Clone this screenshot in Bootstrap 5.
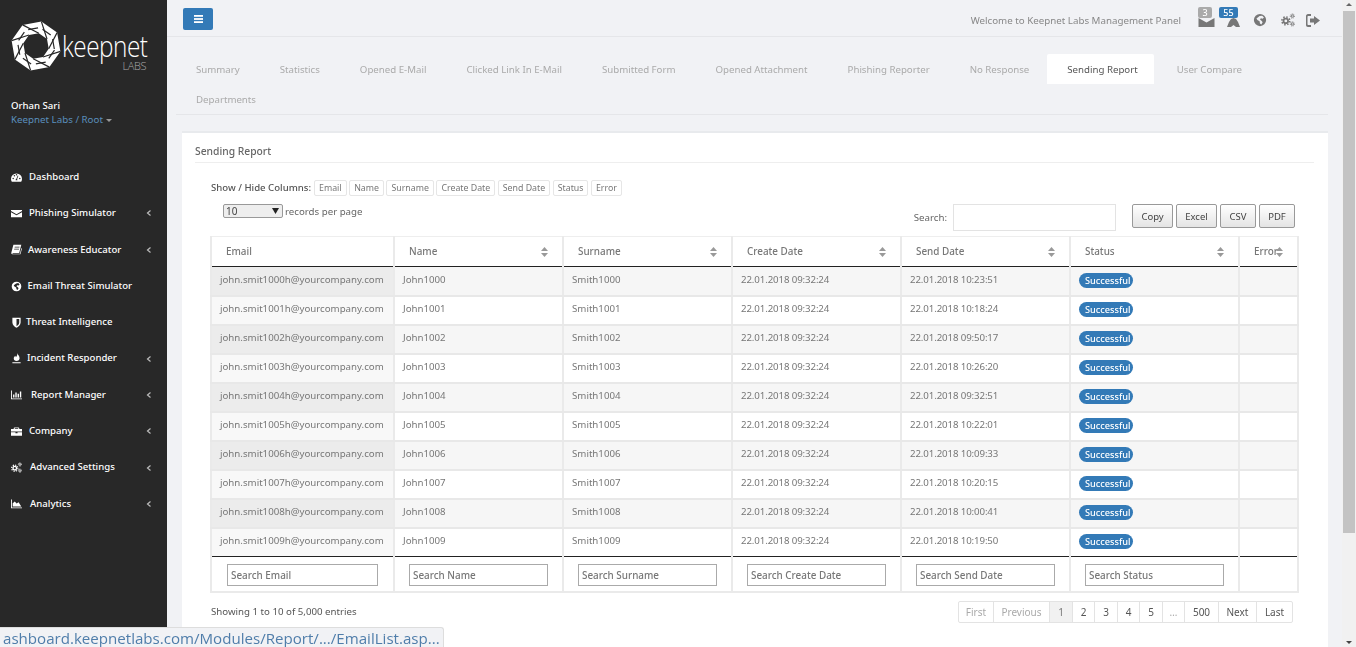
<!DOCTYPE html>
<html lang="en"><head><meta charset="utf-8"><title>Sending Report</title>
<link rel="stylesheet" href="https://cdn.jsdelivr.net/npm/bootstrap@5.3.0/dist/css/bootstrap.min.css">
<style>
html,body{height:100%;overflow:hidden}
body{font-family:"Noto Sans","Open Sans",sans-serif;font-size:9.7px;color:#777;background:#f1f2f5}
.shell{height:647px}
.side{width:167px;background:#282828;color:#fff;flex:none}
.brand{padding:21px 0 0 11px;height:99px}
.brand-txt{width:85px;margin-left:1px}
.brand-word{font-family:"Open Sans",sans-serif;font-weight:300;font-size:29px;line-height:24px;letter-spacing:-.6px;color:#fff;margin-top:13px;white-space:nowrap;transform:scaleX(.84);transform-origin:left center;height:24px}
.brand-labs{font-family:"Open Sans",sans-serif;font-weight:300;font-size:11px;line-height:10px;color:#aaa;text-align:right;letter-spacing:-.4px;margin-top:3px;padding-right:1px}
.who{padding:0 11px;height:29px;line-height:14px;margin-bottom:31px}
.who b{font-weight:500;display:block;color:#fff;font-size:9.6px}
.who span{color:#5a8fbd;font-size:9.75px}
.who i{display:inline-block;border:3px solid transparent;border-top-color:#999;border-bottom:0;margin:0 0 1px 3px}
.menu a{display:flex;align-items:center;height:36.3px;color:#fff;text-decoration:none;padding-left:11px;font-weight:500;white-space:nowrap;font-size:9.6px}
.menu svg{width:11px;height:11px;fill:#fff;flex:none}
.menu .lbl{margin-left:var(--g,7px)}
.menu .chev{margin-left:auto;margin-right:15px;width:6px;height:6px;fill:none;stroke:#bbb;stroke-width:1.2}
.mainc{flex:1 1 0;min-width:0;overflow:hidden;will-change:transform}
.topb{height:37px;border-bottom:1px solid #e5e6e9;padding:8px 22px 0 16px}
.menubtn{width:30px;height:22px;background:#337ab7;border:0;border-radius:2px;padding:0;display:flex;align-items:center;justify-content:center}
.welcome{color:#888;margin-right:17px;font-size:9.75px;margin-top:6px}
.tic{position:relative;display:block;fill:#777;color:#777}
.tbadge{position:absolute;top:-1px;font-size:9px;line-height:11px;height:11px;padding:0 3px;border-radius:2px;color:#fff;text-align:center;font-weight:500}
.tabs-k{margin:17px 0 0 9px;padding-right:60px;border:0;--bs-nav-tabs-border-width:0;row-gap:0}
.tabs-k .nav-link{font-size:9.68px;color:#aaa;padding:0 20px;height:30px;line-height:31px;border-radius:2px 2px 0 0;border:0;margin:0;white-space:nowrap}
.tabs-k .nav-link.active{background:#fff;color:#555;padding-right:16px;margin-left:-2px}
.tabs-k .active-next .nav-link{padding-left:23px}
.tabrule{border-top:1px solid #e5e6e9;margin:0 14px 0 9px;height:0}
.repcard{margin:16px 14px 0 15px;border:0;border-top:2px solid #e8eaed;border-radius:0;background:#fff;padding:0 14px 0 13px;height:520px}
.rep-title{height:30px;line-height:37px;border-bottom:1px solid #eee;font-weight:500;color:#666;font-size:10.3px}
.colsrow{padding-left:16px;margin-top:17px;height:16px;line-height:16px;color:#555;font-weight:500;font-size:9.6px}
.colsrow .lead-in{margin-right:3px}
.chip{border:1px solid #e6e6e6;border-radius:2px;height:16px;line-height:14px;padding:0 4px;margin-right:2.500px;color:#777;font-size:8.8px;font-weight:400;background:#fff}
.toolrow{padding-left:16px;margin-top:8px;height:32px;padding-right:19px}
.rppsel{width:60px;height:14px;font-size:10px;line-height:12px;border:1px solid #999;border-radius:2px;background:#eee url("data:image/svg+xml,%3Csvg xmlns='http://www.w3.org/2000/svg' width='7' height='6'%3E%3Cpath d='M0 0h7L3.500 6z' fill='%23222'/%3E%3C/svg%3E") no-repeat right 3px center;color:#444;padding:0 2px;margin-left:12px;appearance:none}
.lenlab{color:#666;height:13px;line-height:13px;margin-top:1px;margin-left:2px}
.srch{width:163px;height:27px;border:1px solid #e3e3e3;border-radius:0;margin:0 16px 0 6px;padding:0}
.xbtn{height:24px;padding:0;line-height:24px;font-size:9.5px;color:#444;border:1px solid #999;border-radius:2px;background:linear-gradient(#fff,#e4e4e4);margin-right:3px;text-align:center}
.tblk{width:1089px;margin:0 0 0 15px;table-layout:fixed;border-collapse:collapse;--bs-table-bg:transparent;color:#777}
.tblk>*>tr>*{border:0;border-left:2px solid #eaeaea;border-right:2px solid #eaeaea;padding:0 8px;vertical-align:middle;font-size:9.7px;color:#777;white-space:nowrap;overflow:hidden}
.tblk thead th{height:30px;border-top:1px solid #eee;border-bottom:1px solid #222;font-weight:500;padding:0 14px;position:relative;color:#777;font-size:9.9px}
.tblk tbody td{height:29px;border-bottom:2px solid #e8e8e8;padding-bottom:1px}
.tblk tbody td:nth-child(4),.tblk tbody td:nth-child(5){letter-spacing:-.12px}
.tblk tbody tr:last-child td{border-bottom:1px solid #222}
.tblk tbody tr:nth-child(odd) td{background:#f6f6f6}
.tblk tbody tr:nth-child(odd) td:first-child{background:#ececec}
.tblk tbody tr:nth-child(even) td:first-child{background:#f8f8f8}
.tblk>tfoot>tr>td{height:35px;border-bottom:2px solid #eaeaea;padding:2px 14px 0}
.tblk>tfoot>tr>td:first-child{padding-left:15px}
.tblk tfoot td:first-child .colin{width:151px}
.sorti{position:absolute;right:14px;top:10px;width:7px;height:10px;fill:#999}
.stat{--bs-badge-font-size:9.2px;--bs-badge-font-weight:500;--bs-badge-padding-x:6px;--bs-badge-padding-y:0;line-height:15px;height:15px;width:54px;background:#337ab7;display:block}
.colin{width:139px;height:22px;border:1px solid #aaa;font-size:9.9px;padding:0 3px;color:#777;display:block;background:#fff;border-radius:0}
.colin::placeholder{color:#777;font-weight:500}
.foot{padding-left:16px;margin-top:8px;padding-right:21px}
.pagek{--bs-pagination-padding-x:0;--bs-pagination-padding-y:0;--bs-pagination-font-size:10px;--bs-pagination-color:#555;--bs-pagination-border-color:#e3e3e3;--bs-pagination-border-radius:2px;margin:0}
.pagek .page-link{height:22px;line-height:20px;text-align:center;display:block}
.pagek .off{color:#aaa}
.pagek .active .page-link{background:#f1f1f1;color:#777;border-color:#e3e3e3}
.showing{color:#555;margin-top:4px}
.vbar{width:14px;flex:none;background:#f1f1f1;display:flex;flex-direction:column;justify-content:space-between;align-items:center}
.vbar i{display:block;border:3.500px solid transparent}
.vthumb{position:absolute;top:11px;right:1px;width:12px;height:522px;background:#c3c3c3}
.statusb{position:absolute;left:0;bottom:0;height:20px;width:444px;background:#f1f2f5;border:1px solid #ddd;border-left:0;border-bottom:0;border-radius:0 3px 0 0;padding-left:3px;line-height:20px;font-family:"Open Sans","Noto Sans",sans-serif;font-size:15.1px;color:#4f7daa;white-space:nowrap;overflow:hidden}
</style></head><body>
<svg width="0" height="0" class="d-block" style="position:absolute">
<symbol id="i-gauge" viewBox="0 0 16 16"><path d="M8 2a8 8 0 0 0-8 8c0 1.600.5 3 1.200 4h13.600c.7-1 1.200-2.400 1.200-4a8 8 0 0 0-8-8zM3.200 10.500a1.100 1.100 0 1 1 0-2.200 1.100 1.100 0 0 1 0 2.200zM5 6.500a1.100 1.100 0 1 1 0-2.200 1.100 1.100 0 0 1 0 2.200zM8 5.200A1.100 1.100 0 1 1 8 3a1.100 1.100 0 0 1 0 2.200zM9.300 12H6.700a1.600 1.600 0 0 1 1-1.900L9.800 5l1 .4-2 5c.5.300.7 1 .5 1.600zM12.800 10.500a1.100 1.100 0 1 1 0-2.200 1.100 1.100 0 0 1 0 2.200z" fill-rule="evenodd"/></symbol>
<symbol id="i-mail" viewBox="0 0 16 16"><path d="M0 3h16v1.500L8 9 0 4.500zM0 6l8 4.500L16 6v7.500H0z"/></symbol>
<symbol id="i-book" viewBox="0 0 16 16"><path d="M3.500 1H15l-.4 1.500-2.700 10.500H2.600c-.6 0-.6 1 0 1H13l2-8 1 .6L13.700 15H2C.6 15 .2 13.600.5 12.500zM5.500 4l-.3 1h7l.3-1zM4.800 7l-.3 1h7l.3-1z" fill-rule="evenodd"/></symbol>
<symbol id="i-globe" viewBox="0 0 16 16"><path d="M8 1a7 7 0 1 0 0 14A7 7 0 0 0 8 1zm-.5 2.500L10.500 3l2 2-1.500 1.500-2-.5-1 1.500 2 1.500 1 1.500-1.500 2.500-1.500-1-.5-2.500-2.500-1.500L4 6l1.500-1z" fill-rule="evenodd"/></symbol>
<symbol id="i-shield" viewBox="0 0 16 16"><path d="M2 1h12v7c0 4-3.500 6.500-6 7.500C5.500 14.500 2 12 2 8zM8 3v10.300c2-1 4-2.800 4-5.300V3z" fill-rule="evenodd"/></symbol>
<symbol id="i-fire" viewBox="0 0 16 16"><path d="M9 0c.5 2.500 3.500 4 3.500 7.500 0 2.200-1.800 4-4.500 4-2.500 0-4-1.700-4-3.500 0-2 1.500-2.700 2-4 .8.500 1 1.300 1 2C8.500 5 9.500 3 9 0zM2 13.500h12V15H2z"/></symbol>
<symbol id="i-bars" viewBox="0 0 16 16"><path d="M0 2h1.300v11.700H16V15H0zM3 8h2v4.500H3zM6.300 5h2v7.500h-2zM9.600 7h2v5.500h-2zM12.900 3.500h2v9h-2z"/></symbol>
<symbol id="i-case" viewBox="0 0 16 16"><path d="M5 2h6l1 1v1.500h4V8H0V4.500h4V3zm.5 1.200v1.300h5V3.200zM0 9h6.500v1.500h3V9H16v5H0z" fill-rule="evenodd"/></symbol>
<symbol id="i-cogs" viewBox="0 0 16 16"><g fill="none" stroke="currentColor"><circle cx="5.500" cy="9" r="2.600" stroke-width="2"/><circle cx="5.500" cy="9" r="4.500" stroke-width="1.800" stroke-dasharray="1.770 1.760"/><circle cx="13" cy="3.500" r="1.300" stroke-width="1.100"/><circle cx="13" cy="3.500" r="2.400" stroke-width="1.100" stroke-dasharray="1 .9"/><circle cx="13" cy="12.500" r="1.300" stroke-width="1.100"/><circle cx="13" cy="12.500" r="2.400" stroke-width="1.100" stroke-dasharray="1 .9"/></g></symbol>
<symbol id="i-area" viewBox="0 0 16 16"><path d="M0 2h1.300v11.700H16V15H0zM2.500 12.500V7.500L5.500 5l2.700 3L11 6l4 6.500z"/></symbol>
<symbol id="i-sort" viewBox="0 0 7 10"><path d="M3.500 0 7 4H0zM0 6h7l-3.500 4z"/></symbol>
</svg>
<div class="shell d-flex position-relative">
<aside class="side">
<div class="brand d-flex">
<svg width="50" height="50" viewBox="0 0 50 50" class="flex-shrink-0"><path fill="#fff" fill-rule="evenodd" d="M49.400 30.400 38.400 46.100 19.600 49.400 3.900 38.400 .6 19.600 11.600 3.900 30.400 .6 46.100 11.600ZM37.700 27.800 36 18 27.800 12.300 18 14 12.300 22.200 14 32 22.200 37.700 32 36Z"/><path fill="none" stroke="#282828" stroke-width="1.200" d="M49.400 30.400 32 36M38.400 46.100 22.200 37.700M19.600 49.400 14 32M3.900 38.400 12.300 22.200M.6 19.600 18 14M11.600 3.900 27.800 12.300M30.400 .6 36 18M46.100 11.600 37.700 27.800"/><path fill="none" stroke="#282828" stroke-width="1.200" stroke-dasharray="10 5" d="M43.500 29.100 35.200 41 20.900 43.500 9 35.200 6.500 20.900 14.800 9 29.100 6.500 41 14.800Z"/></svg>
<div class="brand-txt"><div class="brand-word">keepnet</div><div class="brand-labs">LABS</div></div>
</div>
<div class="who"><b>Orhan Sari</b><span>Keepnet Labs / Root</span><i></i></div>
<nav class="menu">
<a href="#"><svg><use href="#i-gauge"/></svg><span class="lbl">Dashboard</span></a>
<a href="#"><svg><use href="#i-mail"/></svg><span class="lbl">Phishing Simulator</span><svg class="chev" viewBox="0 0 6 6"><path d="M4.500.5 1.500 3l3 2.500"/></svg></a>
<a href="#"><svg><use href="#i-book"/></svg><span class="lbl" style="--g:6px">Awareness Educator</span><svg class="chev" viewBox="0 0 6 6"><path d="M4.500.5 1.500 3l3 2.500"/></svg></a>
<a href="#"><svg><use href="#i-globe"/></svg><span class="lbl" style="--g:5.500px">Email Threat Simulator</span></a>
<a href="#"><svg><use href="#i-shield"/></svg><span class="lbl" style="--g:4px">Threat Intelligence</span></a>
<a href="#"><svg><use href="#i-fire"/></svg><span class="lbl" style="--g:5px">Incident Responder</span><svg class="chev" viewBox="0 0 6 6"><path d="M4.500.5 1.500 3l3 2.500"/></svg></a>
<a href="#"><svg><use href="#i-bars"/></svg><span class="lbl" style="--g:9px">Report Manager</span><svg class="chev" viewBox="0 0 6 6"><path d="M4.500.5 1.500 3l3 2.500"/></svg></a>
<a href="#"><svg><use href="#i-case"/></svg><span class="lbl">Company</span><svg class="chev" viewBox="0 0 6 6"><path d="M4.500.5 1.500 3l3 2.500"/></svg></a>
<a href="#"><svg><use href="#i-cogs"/></svg><span class="lbl" style="--g:8px">Advanced Settings</span><svg class="chev" viewBox="0 0 6 6"><path d="M4.500.5 1.500 3l3 2.500"/></svg></a>
<a href="#"><svg><use href="#i-area"/></svg><span class="lbl" style="--g:8px">Analytics</span><svg class="chev" viewBox="0 0 6 6"><path d="M4.500.5 1.500 3l3 2.500"/></svg></a>
</nav>
</aside>
<main class="mainc">
<div class="topb d-flex">
<button class="menubtn" aria-label="Menu"><svg width="9" height="8" viewBox="0 0 9 8" fill="#fff"><rect width="9" height="1.800"/><rect y="3.100" width="9" height="1.800"/><rect y="6.200" width="9" height="1.800"/></svg></button>
<div class="ms-auto d-flex align-items-start">
<span class="welcome">Welcome to Keepnet Labs Management Panel</span>
<span class="tic" style="width:17px;height:22px;margin-right:4px"><svg width="17" height="9" viewBox="0 0 16 9" style="position:absolute;left:0;top:10px" fill="#777"><path d="M0 0l8 4.500L16 0v9H0z"/></svg><span class="tbadge" style="left:0;width:14px;background:#aaa">3</span></span>
<span class="tic" style="width:22px;height:22px;margin-right:12px"><svg width="13" height="9" viewBox="0 0 13 9" style="position:absolute;left:8px;top:10px" fill="#777"><path d="M6.500 0 9 1l2 3 2 5H9L6.500 7 4 9H0l2-5 2-3z"/></svg><span class="tbadge" style="left:0;width:19px;background:#337ab7">55</span></span>
<svg class="tic" width="14" height="14" style="margin:5px 13px 0 0"><use href="#i-globe"/></svg>
<svg class="tic" width="16" height="14" style="margin:5px 10px 0 0"><use href="#i-cogs"/></svg>
<svg class="tic" width="14" height="13" viewBox="0 0 14 13" style="margin-top:6px"><path d="M5 0v2H2L1.500 2.500v8l.5.500h3v2H2C.8 13 0 12 0 11V2C0 1 .8 0 2 0zM8 2l6 4.500L8 11V8.500H4v-4h4z"/></svg>
</div>
</div>
<ul class="nav nav-tabs tabs-k">
<li class="nav-item"><a class="nav-link" href="#">Summary</a></li>
<li class="nav-item"><a class="nav-link" href="#">Statistics</a></li>
<li class="nav-item"><a class="nav-link" href="#">Opened E-Mail</a></li>
<li class="nav-item"><a class="nav-link" href="#">Clicked Link In E-Mail</a></li>
<li class="nav-item"><a class="nav-link" href="#">Submitted Form</a></li>
<li class="nav-item"><a class="nav-link" href="#">Opened Attachment</a></li>
<li class="nav-item"><a class="nav-link" href="#">Phishing Reporter</a></li>
<li class="nav-item"><a class="nav-link" href="#">No Response</a></li>
<li class="nav-item"><a class="nav-link active" href="#">Sending Report</a></li>
<li class="nav-item active-next"><a class="nav-link" href="#">User Compare</a></li>
<li class="nav-item"><a class="nav-link" href="#">Departments</a></li>
</ul>
<div class="tabrule"></div>
<section class="card repcard">
<div class="rep-title">Sending Report</div>
<div class="colsrow d-flex"><span class="lead-in">Show / Hide Columns:</span><span class="chip">Email</span><span class="chip">Name</span><span class="chip">Surname</span><span class="chip">Create Date</span><span class="chip">Send Date</span><span class="chip">Status</span><span class="chip">Error</span></div>
<div class="toolrow d-flex align-items-start">
<select class="rppsel" aria-label="Records"><option>10</option></select><span class="lenlab">records per page</span>
<span class="ms-auto lenlab" style="margin-top:7px">Search:</span><input class="srch form-control" aria-label="Search">
<button class="btn xbtn" style="width:41px">Copy</button><button class="btn xbtn" style="width:41px">Excel</button><button class="btn xbtn" style="width:36px">CSV</button><button class="btn xbtn me-0" style="width:36px">PDF</button>
</div>
<table class="table tblk mb-0">
<colgroup><col style="width:183px"><col style="width:169px"><col style="width:169px"><col style="width:169px"><col style="width:169px"><col style="width:169px"><col></colgroup>
<thead><tr><th>Email</th><th>Name<svg class="sorti"><use href="#i-sort"/></svg></th><th>Surname<svg class="sorti"><use href="#i-sort"/></svg></th><th>Create Date<svg class="sorti"><use href="#i-sort"/></svg></th><th>Send Date<svg class="sorti"><use href="#i-sort"/></svg></th><th>Status<svg class="sorti"><use href="#i-sort"/></svg></th><th>Error<svg class="sorti"><use href="#i-sort"/></svg></th></tr></thead>
<tbody>
<tr><td>john.smit1000h@yourcompany.com</td><td>John1000</td><td>Smith1000</td><td>22.01.2018 09:32:24</td><td>22.01.2018 10:23:51</td><td><span class="badge rounded-pill stat">Successful</span></td><td></td></tr>
<tr><td>john.smit1001h@yourcompany.com</td><td>John1001</td><td>Smith1001</td><td>22.01.2018 09:32:24</td><td>22.01.2018 10:18:24</td><td><span class="badge rounded-pill stat">Successful</span></td><td></td></tr>
<tr><td>john.smit1002h@yourcompany.com</td><td>John1002</td><td>Smith1002</td><td>22.01.2018 09:32:24</td><td>22.01.2018 09:50:17</td><td><span class="badge rounded-pill stat">Successful</span></td><td></td></tr>
<tr><td>john.smit1003h@yourcompany.com</td><td>John1003</td><td>Smith1003</td><td>22.01.2018 09:32:24</td><td>22.01.2018 10:26:20</td><td><span class="badge rounded-pill stat">Successful</span></td><td></td></tr>
<tr><td>john.smit1004h@yourcompany.com</td><td>John1004</td><td>Smith1004</td><td>22.01.2018 09:32:24</td><td>22.01.2018 09:32:51</td><td><span class="badge rounded-pill stat">Successful</span></td><td></td></tr>
<tr><td>john.smit1005h@yourcompany.com</td><td>John1005</td><td>Smith1005</td><td>22.01.2018 09:32:24</td><td>22.01.2018 10:22:01</td><td><span class="badge rounded-pill stat">Successful</span></td><td></td></tr>
<tr><td>john.smit1006h@yourcompany.com</td><td>John1006</td><td>Smith1006</td><td>22.01.2018 09:32:24</td><td>22.01.2018 10:09:33</td><td><span class="badge rounded-pill stat">Successful</span></td><td></td></tr>
<tr><td>john.smit1007h@yourcompany.com</td><td>John1007</td><td>Smith1007</td><td>22.01.2018 09:32:24</td><td>22.01.2018 10:20:15</td><td><span class="badge rounded-pill stat">Successful</span></td><td></td></tr>
<tr><td>john.smit1008h@yourcompany.com</td><td>John1008</td><td>Smith1008</td><td>22.01.2018 09:32:24</td><td>22.01.2018 10:00:41</td><td><span class="badge rounded-pill stat">Successful</span></td><td></td></tr>
<tr><td>john.smit1009h@yourcompany.com</td><td>John1009</td><td>Smith1009</td><td>22.01.2018 09:32:24</td><td>22.01.2018 10:19:50</td><td><span class="badge rounded-pill stat">Successful</span></td><td></td></tr>
</tbody>
<tfoot><tr><td><input class="colin" placeholder="Search Email" aria-label="Search Email"></td><td><input class="colin" placeholder="Search Name" aria-label="Search Name"></td><td><input class="colin" placeholder="Search Surname" aria-label="Search Surname"></td><td><input class="colin" placeholder="Search Create Date" aria-label="Search Create Date"></td><td><input class="colin" placeholder="Search Send Date" aria-label="Search Send Date"></td><td><input class="colin" placeholder="Search Status" aria-label="Search Status"></td><td></td></tr></tfoot>
</table>
<div class="foot d-flex justify-content-between align-items-start">
<span class="showing">Showing 1 to 10 of 5,000 entries</span>
<ul class="pagination pagek">
<li class="page-item" style="width:36px"><a class="page-link off" href="#">First</a></li>
<li class="page-item" style="width:56px"><a class="page-link off" href="#">Previous</a></li>
<li class="page-item active" style="width:23px"><a class="page-link" href="#">1</a></li>
<li class="page-item" style="width:22px"><a class="page-link" href="#">2</a></li>
<li class="page-item" style="width:23px"><a class="page-link" href="#">3</a></li>
<li class="page-item" style="width:22px"><a class="page-link" href="#">4</a></li>
<li class="page-item" style="width:23px"><a class="page-link" href="#">5</a></li>
<li class="page-item" style="width:22px"><a class="page-link off" href="#">…</a></li>
<li class="page-item" style="width:34px"><a class="page-link" href="#">500</a></li>
<li class="page-item" style="width:38px"><a class="page-link" href="#">Next</a></li>
<li class="page-item" style="width:36px"><a class="page-link" href="#">Last</a></li>
</ul>
</div>
</section>
</main>
<div class="vbar position-relative"><i style="border-bottom-color:#666"></i><span class="vthumb"></span><i style="border-top-color:#444"></i></div>
<div class="statusb">ashboard.keepnetlabs.com/Modules/Report/.../EmailList.asp...</div>
</div>
</body></html>
